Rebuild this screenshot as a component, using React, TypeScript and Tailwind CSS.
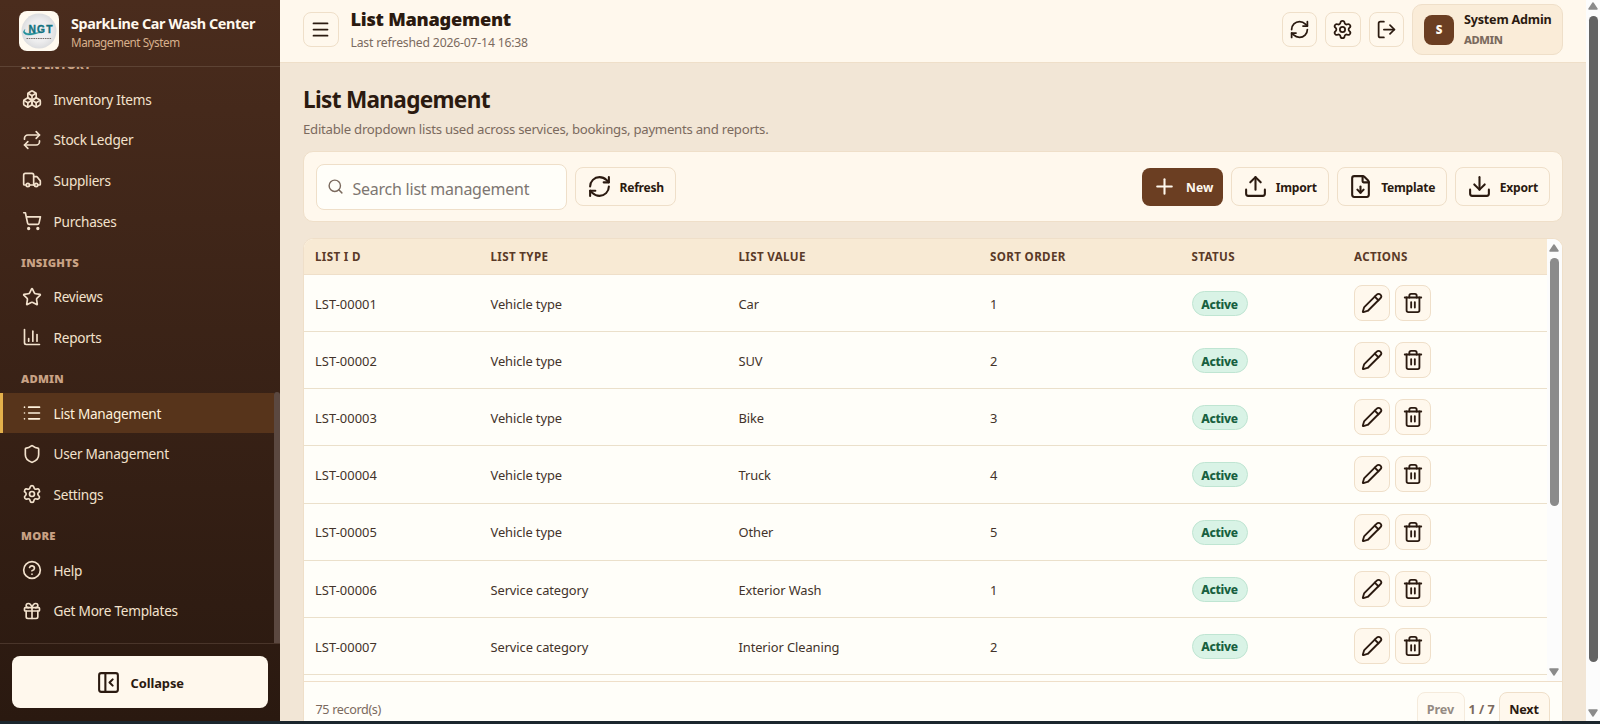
import type { ReactNode } from "react";
import {
  Boxes,
  ChartColumn,
  CircleQuestionMark,
  Download,
  FileDown,
  Gift,
  List,
  LogOut,
  Menu,
  PanelLeftClose,
  Pencil,
  Plus,
  RefreshCw,
  Repeat,
  Search,
  Settings,
  Shield,
  ShoppingCart,
  Star,
  Trash2,
  Truck,
  Upload,
  type LucideIcon,
} from "lucide-react";

// ─── Data ───────────────────────────────────────────────────────────────────────

interface NavItem {
  label: string;
  icon: LucideIcon;
  active?: boolean;
}

interface NavSection {
  title: string;
  items: NavItem[];
}

const NAV: NavSection[] = [
  {
    title: "Inventory",
    items: [
      { label: "Inventory Items", icon: Boxes },
      { label: "Stock Ledger", icon: Repeat },
      { label: "Suppliers", icon: Truck },
      { label: "Purchases", icon: ShoppingCart },
    ],
  },
  {
    title: "Insights",
    items: [
      { label: "Reviews", icon: Star },
      { label: "Reports", icon: ChartColumn },
    ],
  },
  {
    title: "Admin",
    items: [
      { label: "List Management", icon: List, active: true },
      { label: "User Management", icon: Shield },
      { label: "Settings", icon: Settings },
    ],
  },
  {
    title: "More",
    items: [
      { label: "Help", icon: CircleQuestionMark },
      { label: "Get More Templates", icon: Gift },
    ],
  },
];

const ROWS = [
  { id: "LST-00001", type: "Vehicle type", value: "Car", order: 1 },
  { id: "LST-00002", type: "Vehicle type", value: "SUV", order: 2 },
  { id: "LST-00003", type: "Vehicle type", value: "Bike", order: 3 },
  { id: "LST-00004", type: "Vehicle type", value: "Truck", order: 4 },
  { id: "LST-00005", type: "Vehicle type", value: "Other", order: 5 },
  { id: "LST-00006", type: "Service category", value: "Exterior Wash", order: 1 },
  { id: "LST-00007", type: "Service category", value: "Interior Cleaning", order: 2 },
];

const COLUMNS = ["List I D", "List Type", "List Value", "Sort Order", "Status", "Actions"];

const GRID = "grid grid-cols-[175.5px_248px_251.5px_201.5px_162.5px_1fr] pl-[11px]";

// ─── Small pieces ───────────────────────────────────────────────────────────────

function Logo() {
  return (
    <svg viewBox="0 0 40 40" className="size-10 shrink-0" role="img" aria-label="NGT">
      <defs>
        <radialGradient id="disc">
          <stop offset="0.6" stopColor="#eeeeef" />
          <stop offset="1" stopColor="#dcdddf" />
        </radialGradient>
      </defs>
      <rect width="40" height="40" rx="8" fill="#fffaf0" />
      <circle cx="20" cy="20" r="17.5" fill="url(#disc)" />
      <path
        d="M6 18.5c-3 2.3-1.5 5.3 4 5.5 5 0 7.5-2 12-2.5-4-.2-7.5 1-11.5 1-4.5 0-6-1.7-4.5-4z"
        fill="#1d8e98"
        stroke="#1d8e98"
        strokeWidth="0.5"
      />
      <text
        x="9.5"
        y="21.7"
        fontFamily="'Liberation Sans', Arial, sans-serif"
        fontSize="10.2"
        fontWeight="700"
        fill="#13727f"
        stroke="#13727f"
        strokeWidth="0.4"
        textLength="24"
      >
        NGT
      </text>
      <path d="M7.5 27.5h25" stroke="#77706c" strokeWidth="1" strokeDasharray="1.6 0.7" />
    </svg>
  );
}

function TopButton({ icon: Icon }: { icon: LucideIcon }) {
  return (
    <button className="flex size-[35.5px] items-center justify-center rounded-lg border border-[#efdfc9] bg-[#fff8ed] text-[#2b1a10]">
      <Icon size={21} strokeWidth={2} />
    </button>
  );
}

function RowButton({ icon: Icon }: { icon: LucideIcon }) {
  return (
    <button className="flex size-[36px] items-center justify-center rounded-lg border border-[#efdfc9] bg-[#fff8ed] text-[#2b1a10]">
      <Icon size={22} strokeWidth={2} />
    </button>
  );
}

function ToolButton({ icon: Icon, children }: { icon: LucideIcon; children: ReactNode }) {
  return (
    <button className="flex h-[39px] items-center gap-[8px] rounded-lg border border-[#efdfc9] bg-[#fff8ed] pr-[11px] pl-[10.5px] text-[12.1px] font-bold tracking-[-0.02em] text-[#2b1a10]">
      <Icon size={25} strokeWidth={2} />
      <span className="pt-[3px]">{children}</span>
    </button>
  );
}

function Arrow({ up = false }: { up?: boolean }) {
  return (
    <svg viewBox="0 0 10 8" className="h-2 w-2.5 shrink-0">
      <path
        d={up ? "M5 1 9 7H1z" : "M5 7 9 1H1z"}
        fill="#8b8b8b"
        stroke="#8b8b8b"
        strokeWidth="1.5"
        strokeLinejoin="round"
      />
    </svg>
  );
}

// ─── Sidebar ────────────────────────────────────────────────────────────────────

function Sidebar() {
  return (
    <aside className="flex h-[721px] w-[279.5px] shrink-0 flex-col bg-linear-to-b from-[#4a2c1d] to-[#2a1910]">
      <div className="flex h-[67px] shrink-0 items-center gap-3 border-b border-[#5d4334] pb-1 pl-[19px]">
        <Logo />
        <div className="pt-[3px]">
          <p className="text-[14.4px] leading-[19px] font-bold tracking-[-0.4px] whitespace-nowrap text-[#fff8ed]">
            SparkLine Car Wash Center
          </p>
          <p className="text-[11.7px] leading-[19px] tracking-[-0.46px] text-[#d8b08c]">
            Management System
          </p>
        </div>
      </div>

      <div className="flex h-[576px] shrink-0">
        <nav className="flex flex-1 flex-col justify-end overflow-hidden pb-[12.2px]">
          {NAV.map(section => (
            <div key={section.title} className="shrink-0">
              <p className="flex h-[35.2px] items-end pb-[5.5px] pl-[21px] text-[11.3px] leading-[16px] font-black tracking-[0.02em] text-[#c9a285] uppercase">
                {section.title}
              </p>
              {section.items.map(({ label, icon: Icon, active }) => (
                <div
                  key={label}
                  className={
                    active
                      ? "flex h-[40.6px] items-center gap-[11.5px] border-l-[3px] border-[#e3b04b] bg-[#57341b] pl-[19px] text-[13.6px] tracking-[-0.24px] text-[#fff1dc]"
                      : "flex h-[40.6px] items-center gap-[11.5px] border-l-[3px] border-transparent pl-[19px] text-[13.6px] tracking-[-0.24px] text-[#f3e2cd]"
                  }
                >
                  <Icon size={20} strokeWidth={2} />
                  <span className="pt-[2px]">{label}</span>
                </div>
              ))}
            </div>
          ))}
        </nav>
        <div className="flex w-[6px] flex-col justify-end">
          <div className="h-[251px] rounded-t-sm bg-[#5b4840]" />
        </div>
      </div>

      <div className="flex-1 border-t border-[#49352a] px-3 pt-3">
        <button className="flex h-[52px] w-full items-center justify-center gap-[10px] rounded-lg bg-[#fff8ed] text-[12.9px] font-bold tracking-[-0.1px] text-[#2b1a10]">
          <PanelLeftClose size={25} strokeWidth={2} />
          <span className="pt-[3px]">Collapse</span>
        </button>
      </div>
    </aside>
  );
}

// ─── Top bar ────────────────────────────────────────────────────────────────────

function TopBar() {
  return (
    <header className="flex h-[63px] shrink-0 items-center border-b border-[#efdfc9] bg-[#fff8ed] pr-[23px] pb-[3px] pl-[23.5px]">
      <TopButton icon={Menu} />
      <div className="ml-3 pt-[3px]">
        <p className="text-[18.2px] leading-[22px] font-black tracking-[-0.26px] text-[#2b1a10]">
          List Management
        </p>
        <p className="text-[12.2px] leading-[25px] tracking-[-0.18px] text-[#7b6a5e]">
          Last refreshed 2026-07-14 16:38
        </p>
      </div>
      <div className="ml-auto flex items-center gap-2">
        <TopButton icon={RefreshCw} />
        <TopButton icon={Settings} />
        <TopButton icon={LogOut} />
        <div className="flex h-[51px] w-[151px] items-center gap-[10px] rounded-[10px] border border-[#efdfc9] bg-[#faecd8] pl-[11px]">
          <div className="flex size-[30px] items-center justify-center rounded-lg bg-[#6b3e22] pt-px text-[11.5px] font-black text-[#fff8ed]">
            S
          </div>
          <div className="whitespace-nowrap">
            <p className="text-[12.6px] leading-[20px] font-bold tracking-[-0.2px] text-[#2b1a10]">
              System Admin
            </p>
            <p className="text-[11.2px] leading-[20px] font-extrabold tracking-[-0.4px] text-[#7b6a5e]">
              ADMIN
            </p>
          </div>
        </div>
      </div>
    </header>
  );
}

// ─── Table ──────────────────────────────────────────────────────────────────────

function ListTable() {
  return (
    <section className="mt-4 overflow-hidden rounded-t-[10px] border border-b-0 border-[#efdfc9] bg-[#fffef9]">
      <div className="flex h-[442px]">
        <div className="flex-1">
          <div
            className={`${GRID} h-[36px] items-center border-b border-[#efdfc9] bg-[#f8ead4] text-[11.6px] font-bold tracking-[0.03em] text-[#5a3a28] uppercase`}
          >
            {COLUMNS.map(c => (
              <span key={c}>{c}</span>
            ))}
          </div>
          {ROWS.map(row => (
            <div
              key={row.id}
              className={`${GRID} h-[57.15px] items-center border-b border-[#ebe0cb] text-[12.9px] tracking-[-0.1px] text-[#43332a]`}
            >
              <span className="pt-[3px] tracking-[0.05px]">{row.id}</span>
              <span className="pt-[3px]">{row.type}</span>
              <span className="pt-[3px]">{row.value}</span>
              <span className="pt-[3px]">{row.order}</span>
              <span className="flex pt-px">
                <span className="inline-flex h-[25px] w-[56px] items-center justify-center rounded-full border border-[#bfe5d2] bg-[#d9f3e6] pt-[2px] text-[12px] font-extrabold tracking-[-0.3px] text-[#17603f]">
                  Active
                </span>
              </span>
              <span className="flex gap-[5px]">
                <RowButton icon={Pencil} />
                <RowButton icon={Trash2} />
              </span>
            </div>
          ))}
        </div>
        <div className="flex w-[15.5px] flex-col items-center bg-[#fcfcfc] py-[5px]">
          <Arrow up />
          <div className="mt-[6px] h-[248px] w-[9px] rounded-full bg-[#8b8b8b]" />
          <div className="mt-auto">
            <Arrow />
          </div>
        </div>
      </div>
      <div className="flex h-[60px] items-start border-t border-[#efdfc9] pt-[10px] pr-[12.5px] pl-[11.5px] text-[12.6px] text-[#7b6a5e]">
        <span className="leading-[35px] tracking-[-0.35px]">75 record(s)</span>
        <div className="ml-auto flex items-center gap-1">
          <button className="h-[37px] w-[48px] rounded-lg border border-[#f5ebdc] bg-[#fffbf3] text-[12.6px] font-bold tracking-[-0.1px] text-[#958b83]">
            Prev
          </button>
          <span className="w-[26px] text-center font-bold whitespace-nowrap">1 / 7</span>
          <button className="h-[37px] w-[51px] rounded-lg border border-[#efdfc9] bg-[#fff8ed] text-[12.6px] font-bold tracking-[-0.2px] text-[#2b1a10]">
            Next
          </button>
        </div>
      </div>
    </section>
  );
}

// ─── Page ───────────────────────────────────────────────────────────────────────

export default function App() {
  return (
    <div className="h-[724px] w-[1600px] overflow-hidden bg-[#1b262d] font-['Noto_Sans','Open_Sans',sans-serif]">
      <div className="flex h-[721px] overflow-hidden">
        <Sidebar />
        <div className="flex min-w-0 flex-1 flex-col overflow-hidden bg-[#f2e6d6]">
          <TopBar />
          <main className="pr-[23px] pl-[23.5px]">
            <h1 className="mt-[21px] text-[22.6px] leading-[32px] font-bold tracking-[-0.7px] text-[#2b1a10]">
              List Management
            </h1>
            <p className="mt-[3px] text-[13.2px] leading-[20px] tracking-[-0.26px] text-[#7b6a5e]">
              Editable dropdown lists used across services, bookings, payments and reports.
            </p>

            <div className="mt-[12px] flex h-[71px] items-center gap-2 rounded-[10px] border border-[#efdfc9] bg-[#fff8ed] px-3">
              <label className="flex h-[46px] w-[251px] items-center gap-[8.5px] rounded-lg border border-[#efdfc9] bg-[#fffef9] pl-[10px]">
                <Search size={17} strokeWidth={2} className="text-[#7b6a5e]" />
                <span className="pt-[4px] text-[16px] tracking-[-0.24px] text-[#7d7671]">
                  Search list management
                </span>
              </label>
              <ToolButton icon={RefreshCw}>Refresh</ToolButton>
              <div className="ml-auto flex items-center gap-2">
                <button className="flex h-[38px] items-center gap-[9px] rounded-lg bg-[#6b3e22] px-[10px] text-[12.1px] font-bold text-[#fff8ed]">
                  <Plus size={25} strokeWidth={2} />
                  <span className="pt-[3px]">New</span>
                </button>
                <ToolButton icon={Upload}>Import</ToolButton>
                <ToolButton icon={FileDown}>Template</ToolButton>
                <ToolButton icon={Download}>Export</ToolButton>
              </div>
            </div>

            <ListTable />
          </main>
        </div>

        {/* Window scrollbar */}
        <div className="flex w-[14px] shrink-0 flex-col items-center bg-[#fcfcfc] pt-[2px] pb-1">
          <Arrow up />
          <div className="mt-[6px] h-[646px] w-[9px] rounded-full bg-[#636363]" />
          <div className="mt-auto">
            <Arrow />
          </div>
        </div>
      </div>
    </div>
  );
}
